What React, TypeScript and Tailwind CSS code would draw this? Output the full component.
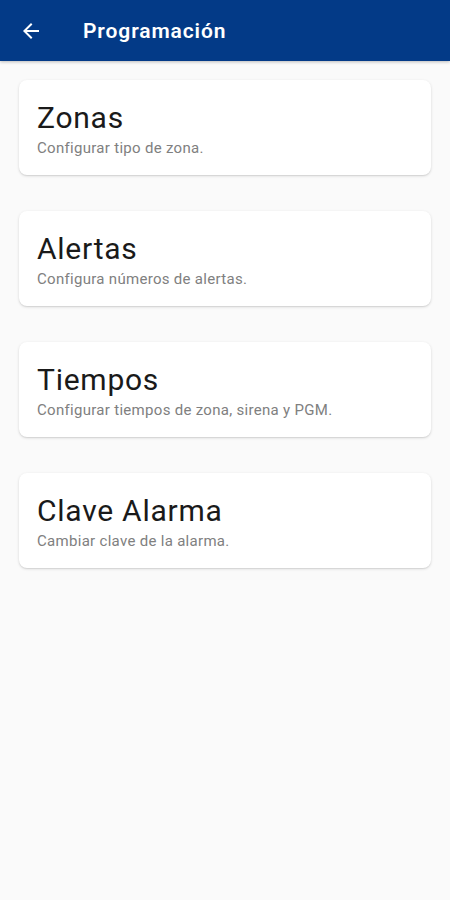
import type { FC } from "react";

const items = [
  { title: "Zonas", desc: "Configurar tipo de zona." },
  { title: "Alertas", desc: "Configura números de alertas." },
  { title: "Tiempos", desc: "Configurar tiempos de zona, sirena y PGM." },
  { title: "Clave Alarma", desc: "Cambiar clave de la alarma." },
];

const App: FC = () => {
  return (
    <div className="min-h-[900px] w-[450px] bg-[#fafafa] font-['Roboto',sans-serif]">
      <header className="h-[61px] bg-[#033a87] flex items-center shadow-[0_1px_3px_rgba(0,0,0,0.25)]">
        <button className="ml-[19px] mt-[1px] w-[24px] h-[24px] flex items-center justify-center text-white">
          <svg width="24" height="24" viewBox="0 0 24 24" fill="currentColor">
            <path d="M20 11H7.83l5.59-5.59L12 4l-8 8 8 8 1.41-1.41L7.83 13H20v-2z" />
          </svg>
        </button>
        <h1 className="ml-[40px] mt-[2px] text-white text-[21px] font-semibold tracking-[0.9px]">
          Programación
        </h1>
      </header>
      <main className="px-[19px] pt-[19px] flex flex-col gap-[36px]">
        {items.map((it) => (
          <div
            key={it.title}
            className="h-[95px] bg-white rounded-[8px] shadow-[0_1px_3px_rgba(0,0,0,0.14),0_1px_1px_rgba(0,0,0,0.06)] px-[18px] pt-[20px]"
          >
            <p className="text-[30px] leading-[36px] tracking-[0.75px] text-[#1a1a1a]">{it.title}</p>
            <p className="text-[15px] leading-[18px] tracking-[0.3px] text-[#808080] mt-[3px]">{it.desc}</p>
          </div>
        ))}
      </main>
    </div>
  );
};

export default App;
